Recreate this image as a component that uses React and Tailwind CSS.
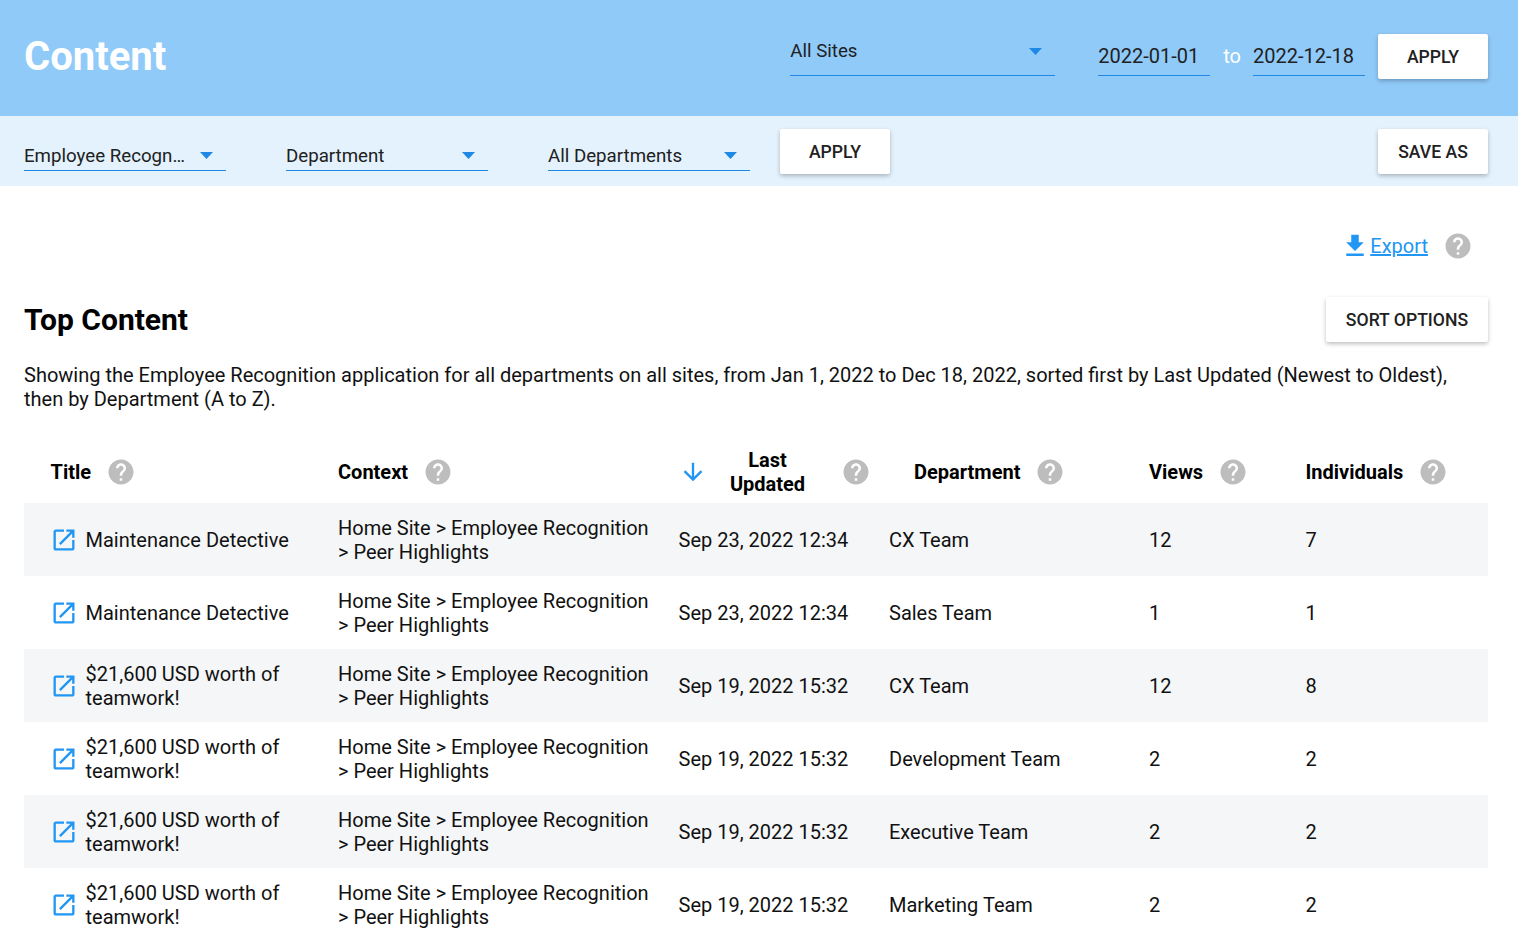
const HELP =
  'M12 2C6.48 2 2 6.48 2 12s4.48 10 10 10 10-4.48 10-10S17.52 2 12 2zm1 17h-2v-2h2v2zm2.07-7.75l-.9.92C13.45 12.9 13 13.5 13 15h-2v-.5c0-1.1.45-2.1 1.17-2.83l1.24-1.26c.37-.36.59-.86.59-1.41 0-1.1-.9-2-2-2s-2 .9-2 2H8c0-2.21 1.79-4 4-4s4 1.79 4 4c0 .88-.36 1.68-.93 2.25z';
const OPEN =
  'M19 19H5V5h7V3H5c-1.11 0-2 .9-2 2v14c0 1.1.89 2 2 2h14c1.1 0 2-.9 2-2v-7h-2v7zM14 3v2h3.59l-9.83 9.83 1.41 1.41L19 6.41V10h2V3h-7z';

const rows = [
  { title: 'Maintenance Detective', date: 'Sep 23, 2022 12:34', dept: 'CX Team', views: 12, people: 7 },
  { title: 'Maintenance Detective', date: 'Sep 23, 2022 12:34', dept: 'Sales Team', views: 1, people: 1 },
  { title: '$21,600 USD worth of teamwork!', date: 'Sep 19, 2022 15:32', dept: 'CX Team', views: 12, people: 8 },
  { title: '$21,600 USD worth of teamwork!', date: 'Sep 19, 2022 15:32', dept: 'Development Team', views: 2, people: 2 },
  { title: '$21,600 USD worth of teamwork!', date: 'Sep 19, 2022 15:32', dept: 'Executive Team', views: 2, people: 2 },
  { title: '$21,600 USD worth of teamwork!', date: 'Sep 19, 2022 15:32', dept: 'Marketing Team', views: 2, people: 2 },
];

function Help({ className = '' }) {
  return (
    <svg viewBox="0 0 24 24" className={'h-[30px] w-[30px] shrink-0 fill-[#bdbdbd] ' + className}>
      <path d={HELP} />
    </svg>
  );
}

function Caret() {
  return (
    <svg viewBox="0 0 13 7" className="h-[7px] w-[13px] shrink-0 fill-[#1e88e5]">
      <path d="M0 0h13L6.5 7z" />
    </svg>
  );
}

function Select({ label, className = '' }) {
  return (
    <div className={'flex h-[30px] w-[202px] items-center justify-between border-b-[1.5px] border-[#1e88e5] pr-[13px] ' + className}>
      <span className="text-[18.7px] text-[#212121]">{label}</span>
      <Caret />
    </div>
  );
}

function Button({ children, className = '' }) {
  return (
    <button
      type="button"
      className={
        'flex h-[45px] items-center justify-center rounded-[2px] bg-white pt-px text-[17.6px] font-medium text-[#212121] shadow-[0_2px_4px_rgba(0,0,0,0.25)] ' +
        className
      }
    >
      {children}
    </button>
  );
}

function HeadCell({ children, className = '' }) {
  return (
    <div className={'flex items-center text-[20px] font-bold leading-[24px] text-black ' + className}>{children}</div>
  );
}

export default function App() {
  return (
    <div className="h-[935px] overflow-hidden bg-white font-['Roboto',sans-serif] text-[20px] leading-[24px] text-[#212121]">
      <header className="flex h-[116px] w-[1518px] items-center bg-[#90caf9] pl-[24px] pr-[30px]">
        <h1 className="-translate-y-px text-[40px] font-bold leading-none text-white">Content</h1>
        <div className="ml-auto flex items-start self-start pt-[34px]">
          <div className="flex h-[42px] w-[265px] items-start justify-between border-b-[1.5px] border-[#1e88e5] pr-[13px] pt-[5px]">
            <span className="text-[18.7px] text-[#212121]">All Sites</span>
            <span className="mt-[9px]">
              <Caret />
            </span>
          </div>
          <div className="ml-[43px] flex h-[42px] w-[112px] items-end border-b-[1.5px] border-[#1e88e5] pb-[7px]">2022-01-01</div>
          <span className="ml-[13px] mr-[12px] self-center pb-[2px] text-white">to</span>
          <div className="flex h-[42px] w-[112px] items-end border-b-[1.5px] border-[#1e88e5] pb-[7px]">2022-12-18</div>
          <Button className="ml-[13px] w-[110px]">APPLY</Button>
        </div>
      </header>

      <div className="flex h-[70px] w-[1518px] items-center bg-[#e3f2fd] pl-[24px] pr-[30px]">
        <div className="flex gap-[60px] pt-[10px]">
          <Select label="Employee Recogn…" />
          <Select label="Department" />
          <Select label="All Departments" />
        </div>
        <Button className="ml-[30px] w-[110px]">APPLY</Button>
        <Button className="ml-auto w-[110px]">SAVE AS</Button>
      </div>

      <main className="pl-[24px] pr-[31px] text-[#111]">
        <div className="flex items-center justify-end pr-[15px] pt-[45px]">
          <a href="#" className="flex items-center text-[#2196f3]">
            <svg viewBox="0 0 24 24" className="-ml-[6px] h-[30px] w-[30px] fill-[#2196f3]">
              <path d="M19 9h-4V3H9v6H5l7 7 7-7zM5 18v2h14v-2H5z" />
            </svg>
            <span className="underline">Export</span>
          </a>
          <Help className="ml-[15px]" />
        </div>

        <div className="mt-[36px] flex items-center justify-between">
          <h2 className="text-[30px] font-bold leading-[36px] text-black">Top Content</h2>
          <Button className="w-[162px]">SORT OPTIONS</Button>
        </div>

        <p className="mt-[21px] text-[20px] leading-[24px]">
          Showing the Employee Recognition application for all departments on all sites, from Jan 1, 2022 to Dec 18, 2022, sorted first by Last Updated (Newest to Oldest), then by Department (A to Z).
        </p>

        <div className="mt-[30px] grid h-[62px] grid-cols-[314px_340px_211px_260px_156px_183px] items-center">
          <HeadCell className="pl-[26.5px]">
            Title
            <Help className="ml-[14.5px]" />
          </HeadCell>
          <HeadCell>
            Context
            <Help className="ml-[15px]" />
          </HeadCell>
          <HeadCell className="pl-[1px]">
            <svg viewBox="0 0 24 24" className="h-[28px] w-[28px] fill-[#2196f3]">
              <path d="M20 12l-1.41-1.41L13 16.17V4h-2v12.17l-5.58-5.59L4 12l8 8 8-8z" />
            </svg>
            <span className="ml-[16.5px] w-[88px] text-center">Last Updated</span>
            <Help className="ml-[29.5px]" />
          </HeadCell>
          <HeadCell className="pl-[25px]">
            Department
            <Help className="ml-[15px]" />
          </HeadCell>
          <HeadCell>
            Views
            <Help className="ml-[15px]" />
          </HeadCell>
          <HeadCell className="pl-[0.5px]">
            Individuals
            <Help className="ml-[14.5px]" />
          </HeadCell>
        </div>

        {rows.map((r, i) => (
          <div
            key={i}
            className={
              'grid h-[73px] grid-cols-[314px_340px_211px_260px_156px_183px] items-center ' +
              (i % 2 === 0 ? 'bg-[#f5f6f8]' : 'bg-white')
            }
          >
            <div className="flex items-center pl-[26px]">
              <svg viewBox="0 0 24 24" className="h-[28px] w-[28px] shrink-0 fill-[#2196f3]">
                <path d={OPEN} />
              </svg>
              <span className="ml-[7.5px] w-[210px]">{r.title}</span>
            </div>
            <div className="w-[320px]">Home Site &gt; Employee Recognition &gt; Peer Highlights</div>
            <div className="pl-[0.5px]">{r.date}</div>
            <div>{r.dept}</div>
            <div>{r.views}</div>
            <div className="pl-[0.5px]">{r.people}</div>
          </div>
        ))}
      </main>
    </div>
  );
}
